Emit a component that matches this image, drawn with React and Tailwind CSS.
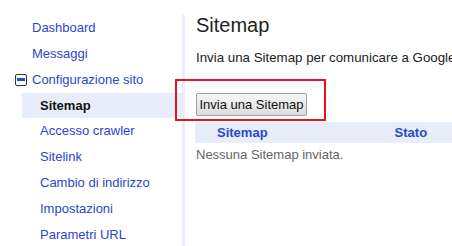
export default function App() {
  const font = { fontFamily: '"Liberation Sans", Arial, sans-serif' };
  const sub = ["Accesso crawler", "Sitelink", "Cambio di indirizzo", "Impostazioni", "Parametri URL"];
  return (
    <div className="relative w-[452px] h-[246px] overflow-hidden bg-white text-[13px]" style={font}>
      <div className="flex h-full">
        <div className="w-[182px] pt-[15px] shrink-0">
          <div className="h-[26px] flex items-center pl-[32px] text-[#2a47d0]">Dashboard</div>
          <div className="h-[26px] flex items-center pl-[32px] text-[#2a47d0]">Messaggi</div>
          <div className="h-[26px] flex items-center pl-[15px] text-[#2a47d0]">
            <span className="w-[12px] h-[12px] border border-[#333] rounded-[2px] bg-white flex items-center justify-center mr-[5px] mb-[1px]">
              <span className="w-[8px] h-[3px] bg-[#2a47d0]"></span>
            </span>
            Configurazione sito
          </div>
          <div className="h-[25px] ml-[22px] flex items-center pl-[18px] bg-[#e8eef9] font-bold text-[#111]">Sitemap</div>
          {sub.map((s) => (
            <div key={s} className="h-[26px] flex items-center pl-[40px] text-[#2a47d0]">{s}</div>
          ))}
        </div>
        <div className="w-[3px] mt-[15px] bg-[#e8eef7] shrink-0"></div>
        <div className="flex-1 min-w-0 pl-[11px]">
          <div className="mt-[13px] text-[20px] leading-[24px] text-[#222]">Sitemap</div>
          <div className="mt-[13px] leading-[15px] text-[13.3px] text-[#222] whitespace-nowrap">Invia una Sitemap per comunicare a Google i</div>
          <button className="mt-[28px] h-[23px] w-[111px] border border-[#a0a0a0] rounded-[2px] bg-gradient-to-b from-[#f6f6f6] to-[#dddddd] text-[13px] text-[#111] flex items-center justify-center">Invia una Sitemap</button>
          <div className="mt-[6px] -ml-[1px] h-[21px] bg-[#e8eef9] flex items-center font-bold text-[#2a47d0]">
            <span className="ml-[22px]">Sitemap</span>
            <span className="ml-[127px]">Stato</span>
          </div>
          <div className="mt-[4px] leading-[15px] text-[#666]">Nessuna Sitemap inviata.</div>
        </div>
      </div>
      <div className="absolute left-[175px] top-[79px] w-[151px] h-[42px] border-2 border-[#e8141b]"></div>
    </div>
  );
}
